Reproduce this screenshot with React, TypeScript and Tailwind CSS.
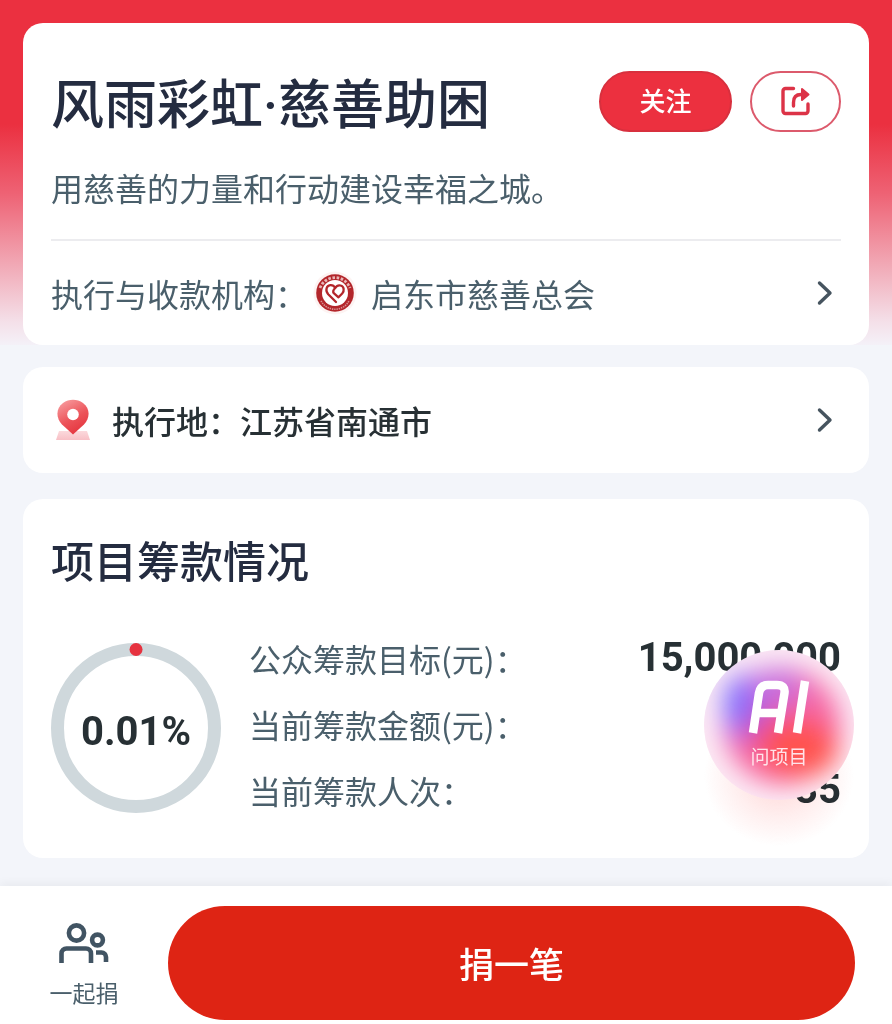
import type { ReactNode } from "react";

function Chevron() {
  return (
    <svg viewBox="0 0 16 26" className="h-[26px] w-4 shrink-0 text-[#46545f]" fill="none" stroke="currentColor" strokeWidth="3.4" strokeLinecap="round" strokeLinejoin="round" aria-hidden="true">
      <path d="M2.5 3 13 13 2.5 23" />
    </svg>
  );
}

function ShareIcon() {
  return (
    <svg viewBox="0 0 30 30" className="h-[30px] w-[30px]" fill="none" stroke="#dc3347" strokeWidth="3.4" strokeLinecap="round" strokeLinejoin="round" aria-hidden="true">
      <path d="M12.500 2.500H4.500A2.500 2.500 0 0 0 2 5V25a2.500 2.500 0 0 0 2.500 2.500H24.500a2.500 2.500 0 0 0 2.500-2.500V18" />
      <path d="M12.500 20V16.500C12.500 11.500 15 8.500 20 8.500H24" />
      <path d="M21 3 27.500 8.500 21 14Z" fill="#dc3347" strokeWidth="2" />
    </svg>
  );
}

function CharityBadge() {
  return (
    <svg viewBox="0 0 44 44" className="h-11 w-11 shrink-0" aria-hidden="true">
      <circle cx="22" cy="22" r="21.500" fill="#fdf3f2" />
      <circle cx="22" cy="22" r="18.800" fill="#b3262b" />
      <path d="M7 17A16 16 0 0 1 37 17" fill="none" stroke="#e9b5b5" strokeWidth="2.800" strokeDasharray="2.600 1.600" />
      <path d="M8 30A16 16 0 0 0 36 30" fill="none" stroke="#d98f90" strokeWidth="1.600" strokeDasharray="1.400 0.900" />
      <circle cx="22" cy="22" r="13" fill="#fff" />
      <path d="M23 31 15.200 23.200C12 19.500 13.300 14.800 17.300 14.200 19.800 14 21.300 15.300 22.300 17 23.500 15 25.500 14 27.500 14.500 31.300 15.500 31.500 19.800 29.200 22.500L25.500 26.300 20.800 22.200C19.500 20.500 20.700 18.500 22.300 17" fill="none" stroke="#b3262b" strokeWidth="2.300" strokeLinecap="round" strokeLinejoin="round" />
    </svg>
  );
}

function PinIcon() {
  return (
    <svg viewBox="0 0 34 42" className="h-[42px] w-[34px] shrink-0" aria-hidden="true">
      <defs>
        <linearGradient id="pin" x1="0.200" y1="0" x2="0.700" y2="1">
          <stop offset="0" stopColor="#f79a9d" />
          <stop offset="0.550" stopColor="#ec5359" />
          <stop offset="1" stopColor="#e4323c" />
        </linearGradient>
        <linearGradient id="pin-base" x1="0" y1="0" x2="0" y2="1">
          <stop offset="0" stopColor="#fbd9dc" />
          <stop offset="1" stopColor="#f8c0c6" />
        </linearGradient>
      </defs>
      <path d="M3 32H31L34 41H0Z" fill="url(#pin-base)" />
      <path d="M17 35.500 6 25.500C-.5 19 0 9 7 4 13-.2 21-.2 27 4 34 9 34.500 19 28 25.500Z" fill="url(#pin)" />
      <circle cx="17" cy="15.500" r="5.800" fill="#fff" />
    </svg>
  );
}

function PeopleIcon() {
  return (
    <svg viewBox="0 0 50 42" className="h-[42px] w-[50px]" fill="none" stroke="#415463" strokeWidth="4.600" aria-hidden="true">
      <circle cx="17.500" cy="11" r="7.600" />
      <circle cx="38.500" cy="18" r="5.400" />
      <path d="M2.500 41V31.500A5 5 0 0 1 7.500 26.500H27A5 5 0 0 1 32 31.500V41" />
      <path d="M37 30.500H42.500A4.500 4.500 0 0 1 47 35V40" />
    </svg>
  );
}

function ProgressRing({ percent }: { percent: number }) {
  const angle = (percent / 100) * Math.PI * 2;
  return (
    <div className="grid h-[170px] w-[170px] shrink-0 place-items-center">
      <svg viewBox="0 0 170 170" className="col-start-1 row-start-1 h-full w-full" aria-hidden="true">
        <circle cx="85" cy="85" r="78.500" fill="none" stroke="#cfd8dc" strokeWidth="13" />
        <circle cx={85 + 78.5 * Math.sin(angle)} cy={85 - 78.5 * Math.cos(angle)} r="6.500" fill="#e6323f" />
      </svg>
      <span className="col-start-1 row-start-1 pt-2 font-['Roboto',sans-serif] text-[40px] leading-none font-bold text-[#273034]">{percent}%</span>
    </div>
  );
}

function Stat({ label, value }: { label: string; value: string }) {
  return (
    <div className="flex h-[66px] items-center justify-between">
      <dt className="text-[32px] text-[#4a5f6b]">{label}</dt>
      <dd className="font-['Roboto',sans-serif] text-[40px] leading-none font-bold text-[#273034]">{value}</dd>
    </div>
  );
}

function Card({ className = "", children }: { className?: string; children: ReactNode }) {
  return <section className={`rounded-[20px] bg-white px-7 ${className}`}>{children}</section>;
}

export default function App() {
  return (
    <div className="relative flex min-h-screen flex-col bg-[#f3f5fa] font-['Noto_Sans_CJK_SC',sans-serif]" lang="zh-CN">
      <main className="flex-1">
        <header className="bg-[linear-gradient(180deg,#eb3040_0%,#eb3040_36%,#ee6274_56%,#f1a6b3_76%,#f4dfe8_93%,#f4f1f8_100%)] px-[23px] pt-[23px]">
          <Card className="pt-[46px]">
            <div className="flex items-center justify-between">
              <h1 className="text-[53px] leading-[64px] font-medium text-[#242c40]">
                风雨彩虹<span className="font-['Roboto',sans-serif] leading-none">·</span>慈善助困
              </h1>
              <div className="flex shrink-0 gap-[18px]">
                <button type="button" className="h-[61px] w-[133px] rounded-full border-2 border-[#d8303e] bg-[#ec303f] pb-1 text-[26px] font-medium text-white">关注</button>
                <button type="button" aria-label="分享" className="flex h-[61px] w-[91px] items-center justify-center rounded-full border-2 border-[#dc5a6c] bg-white">
                  <ShareIcon />
                </button>
              </div>
            </div>
            <p className="mt-8 border-b-2 border-[#ececef] pb-[30px] text-[32px] leading-[44px] text-[#4a5f6b]">用慈善的力量和行动建设幸福之城。</p>
            <a href="#org" className="flex h-[104px] items-center text-[32px] text-[#4a5f6b]">
              <span>执行与收款机构：</span>
              <span className="ml-[6px] flex"><CharityBadge /></span>
              <span className="ml-[14px] flex-1">启东市慈善总会</span>
              <span className="mr-2 flex"><Chevron /></span>
            </a>
          </Card>
        </header>
        <div className="flex flex-col gap-[26px] px-[23px] pt-[22px] pb-7">
          <Card>
            <a href="#place" className="flex h-[106px] items-center pl-[5px] text-[32px] font-medium text-[#273034]">
              <PinIcon />
              <span className="ml-[22px] flex-1">执行地：江苏省南通市</span>
              <span className="mr-2 flex"><Chevron /></span>
            </a>
          </Card>
          <Card className="pt-[30px] pb-[35px]">
            <h2 className="text-[43px] leading-[60px] font-medium text-[#242c40]">项目筹款情况</h2>
            <div className="mt-9 flex items-start">
              <div className="pt-[18px]">
                <ProgressRing percent={0.01} />
              </div>
              <dl className="ml-7 flex-1">
                <Stat label="公众筹款目标(元)：" value="15,000,000" />
                <Stat label="当前筹款金额(元)：" value="" />
                <Stat label="当前筹款人次：" value="35" />
              </dl>
            </div>
          </Card>
        </div>
      </main>
      <div className="absolute top-[650px] right-[38px] h-[150px] w-[150px] mix-blend-multiply">
        <div className="absolute inset-x-0 top-14 h-[140px] rounded-full bg-[radial-gradient(closest-side,#ff7f7f55,#ffb0b033_60%,#ffffff00)]" />
      </div>
      <button type="button" className="absolute top-[650px] right-[38px] flex h-[150px] w-[150px] flex-col items-center overflow-hidden rounded-full bg-[#fceaf5] pt-[30px] text-white">
        <svg viewBox="0 0 150 150" className="absolute inset-0 h-full w-full" aria-hidden="true">
          <defs>
            <filter id="orb-soft" x="-50%" y="-50%" width="200%" height="200%">
              <feGaussianBlur stdDeviation="13" />
            </filter>
          </defs>
          <g filter="url(#orb-soft)">
            <circle cx="78" cy="76" r="58" fill="#f566a4" />
            <ellipse cx="40" cy="56" rx="20" ry="32" fill="#7d6cff" />
            <ellipse cx="72" cy="38" rx="28" ry="20" fill="#c76ddb" />
            <ellipse cx="62" cy="78" rx="20" ry="20" fill="#d94fb0" />
            <ellipse cx="94" cy="98" rx="40" ry="30" fill="#ff5350" />
          </g>
        </svg>
        <svg viewBox="0 0 64 54" className="relative h-[54px] w-16" fill="none" stroke="#fff" strokeWidth="8.500" strokeLinejoin="round" role="img" aria-label="AI">
          <path d="M6 53 12 13Q13.500 5 21 5H30Q38.500 5 37.500 13L31 53M9 33H34" />
          <path d="M58 1 50 53" />
        </svg>
        <span className="relative mt-2 text-[19px] leading-[28px] text-[#ffe3ea]">问项目</span>
      </button>
      <footer className="flex h-[138px] items-center bg-white pr-[37px] shadow-[0_-4px_8px_#0000000a]">
        <a href="#together" className="flex w-[168px] shrink-0 flex-col items-center pt-5 text-[23px] leading-8 text-[#4a5f6b]">
          <PeopleIcon />
          <span className="mt-3">一起捐</span>
        </a>
        <button type="button" className="mt-4 h-[114px] flex-1 rounded-full bg-[#de2414] text-[35px] font-medium text-white">捐一笔</button>
      </footer>
    </div>
  );
}
